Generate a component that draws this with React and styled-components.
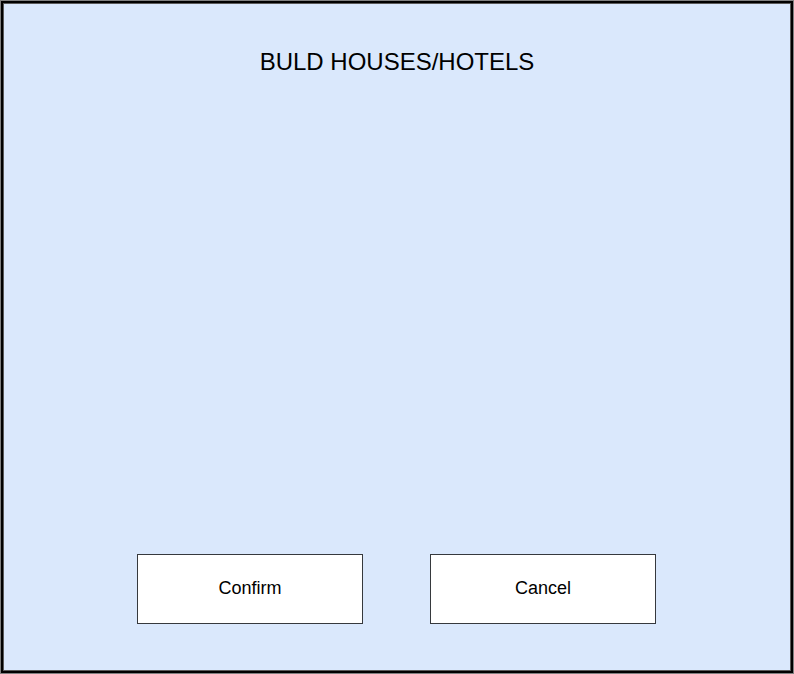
import React from "react";
import styled, { createGlobalStyle } from "styled-components";

const Global = createGlobalStyle`
  html, body { margin: 0; padding: 0; }
  body { font-family: "Liberation Sans", Arial, sans-serif; }
`;

const Frame = styled.div`
  box-sizing: border-box;
  width: 794px;
  height: 674px;
  border: 1px solid #808080;
  background: #000;
  padding: 2px;
`;

const Panel = styled.div`
  box-sizing: border-box;
  height: 100%;
  border: 1px solid #5a5a5a;
  background: #dae8fc;
  display: flex;
  flex-direction: column;
  align-items: center;
  padding: 44px 0 46px;
`;

const Title = styled.h1`
  margin: 0;
  font-size: 24px;
  line-height: 28px;
  font-weight: normal;
  color: #000;
`;

const Spacer = styled.div`
  flex: 1;
`;

const Actions = styled.div`
  display: flex;
  gap: 67px;
  justify-content: center;
  width: 100%;
  padding-right: 1px;
  box-sizing: border-box;
`;

const Button = styled.button`
  box-sizing: border-box;
  width: 226px;
  height: 70px;
  background: #fff;
  border: 1px solid #36393d;
  border-radius: 0;
  font-family: "Liberation Sans", Arial, sans-serif;
  font-size: 18px;
  line-height: 20px;
  color: #000;
  padding: 0 0 2px;
  cursor: pointer;
`;

export default function App() {
  return (
    <>
      <Global />
      <Frame>
        <Panel>
          <Title>BULD HOUSES/HOTELS</Title>
          <Spacer />
          <Actions>
            <Button>Confirm</Button>
            <Button>Cancel</Button>
          </Actions>
        </Panel>
      </Frame>
    </>
  );
}
